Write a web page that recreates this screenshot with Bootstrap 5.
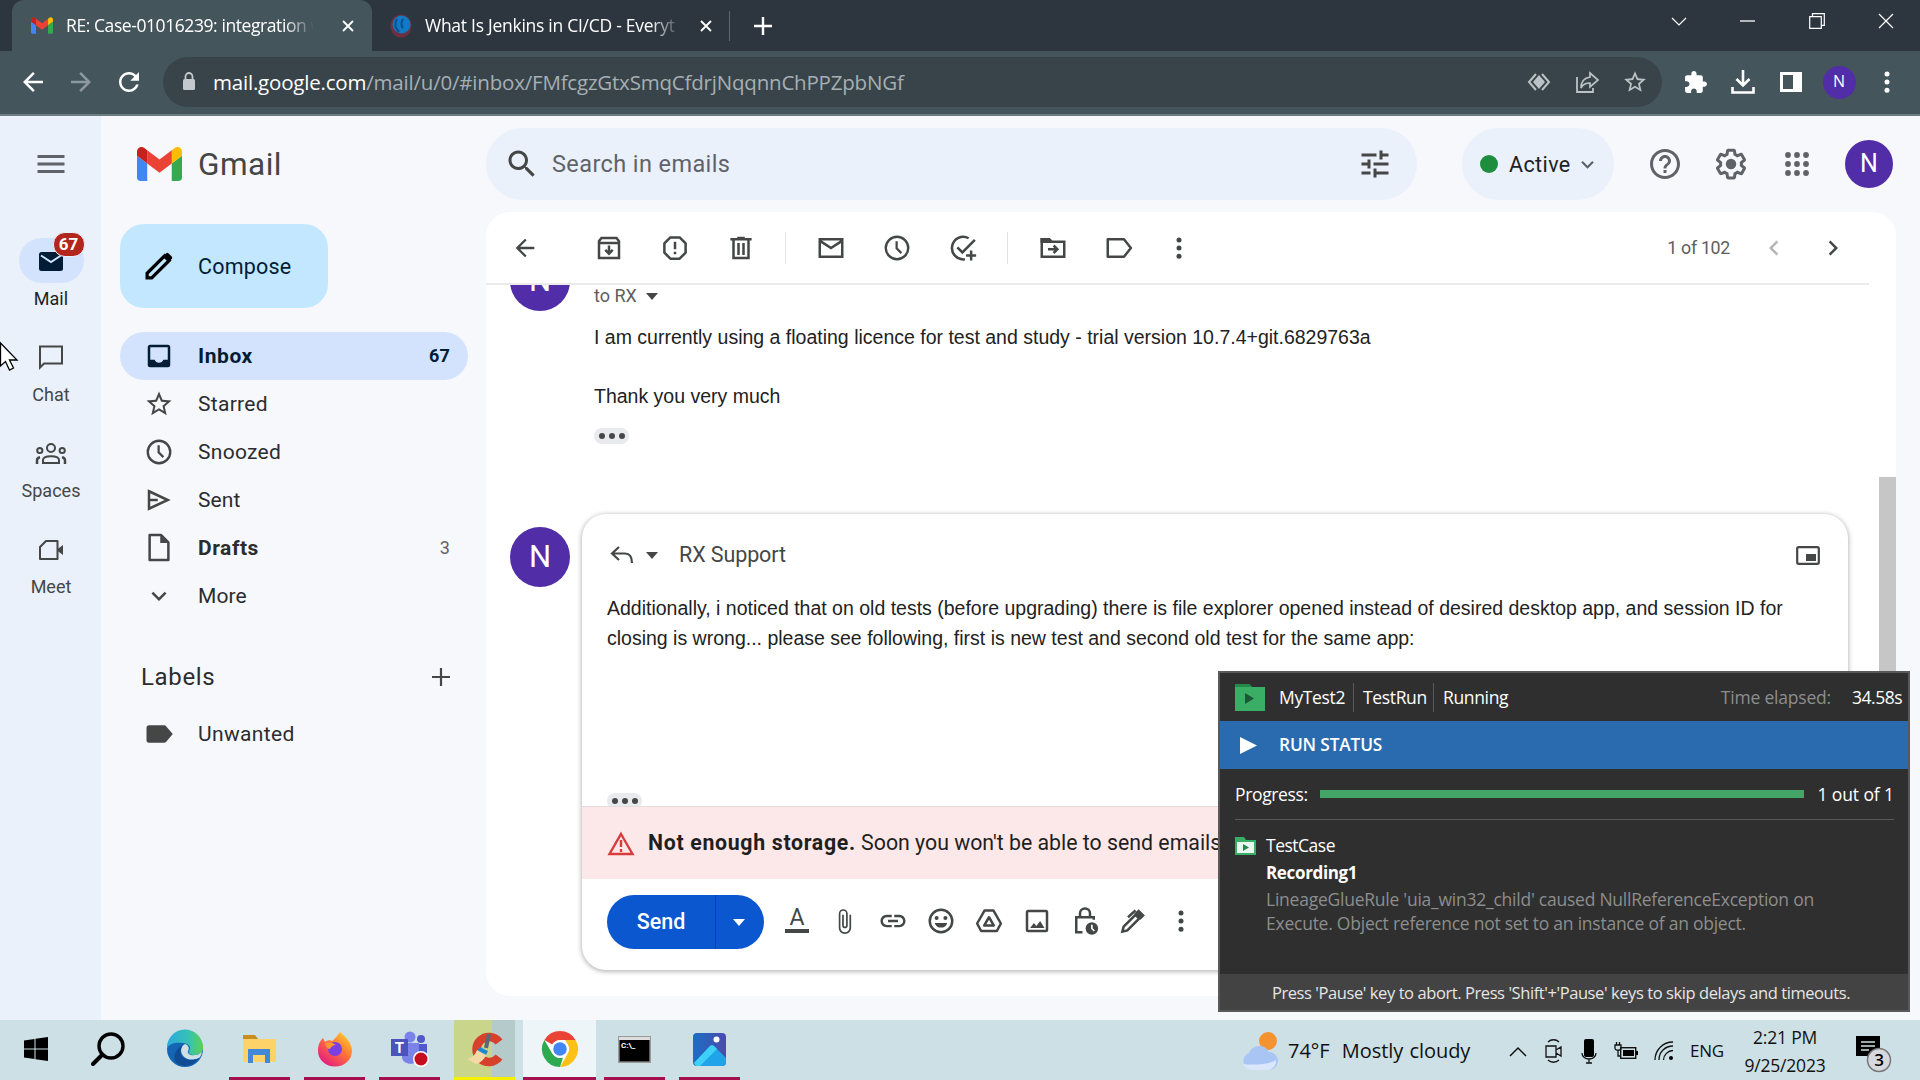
<!DOCTYPE html>
<html lang="en">
<head>
<meta charset="utf-8">
<title>Gmail</title>
<link href="https://cdn.jsdelivr.net/npm/bootstrap@5.3.0/dist/css/bootstrap.min.css" rel="stylesheet">
<style>
body{width:1920px;height:1080px;overflow:hidden;background:#f6f8fc;font-family:Roboto,"Noto Sans",sans-serif;color:#202124;line-height:1.2}
svg{display:block;flex:none;overflow:visible}
.i30{width:30px;height:30px;fill:currentColor}
.i36{width:36px;height:36px;fill:currentColor}
.ln{fill:none;stroke:currentColor;stroke-width:2}
.segoe{font-family:"Open Sans","Noto Sans",sans-serif}
.arial{font-family:"Liberation Sans",Arial,sans-serif}
/* browser chrome */
.tabstrip{height:51px;background:#2d363f;color:#fff;padding-left:12px}
.btab{height:51px;font-size:17.5px;letter-spacing:-.42px}
.btab-on{width:360px;background:#45555c;border-radius:12px 12px 0 0;padding-left:19px}
.btab-off{width:358px;padding-left:18px;border-right:1px solid #5d666e;height:30px}
.btitle{width:248px;overflow:hidden;white-space:nowrap;margin-left:13px;-webkit-mask-image:linear-gradient(90deg,#000 88%,transparent)}
.winbtns{width:276px}
.winbtns>div{width:69px;height:42px}
.bbar{height:65px;background:#45555c;color:#fff;border-bottom:2px solid #6c7d84;padding:6px 9px 7px 9px}
.cell48{width:48px}
.omni{width:1499px;height:50px;border-radius:25px;background:#38444a;margin-left:10px;padding:0 3px 0 14px;font-size:20.5px;color:#a6afb3}
.omni b{color:#fff;font-weight:400}
.av{border-radius:50%;background:#512da8;color:#fff}
/* app */
.app{height:904px}
.rail{width:101px;background:#eaf1fb;color:#444746;font-size:18px;padding-left:1px}
.railhead{height:96px}
.railitem{height:96px;padding-top:24px}
.railpill{width:65px;height:46px;border-radius:23px}
.railpill.on{background:#d3e3fd;color:#001d35}
.rbadge{left:34px;top:-6px;width:32px;height:25px;border-radius:12px;background:#b3261e;border:1px solid #eaf1fb;color:#fff;font-size:17px;font-weight:700}
.side{width:385px;color:#2b2c2f;font-size:21px}
.brand{height:96px;padding-left:36px;font-size:31.5px;color:#444746}
.compose{width:208px;height:84px;border-radius:24px;background:#c2e7ff;color:#001d35;margin:12px 0 24px 19px;padding-left:24px}
.srow{width:348px;height:48px;margin-left:19px;padding:0 18px 0 24px;border-radius:24px;letter-spacing:.12px}
.srow .i30,.compose .i30{color:#444746}
.srow.on{background:#d3e3fd;color:#001d35;font-weight:700}
.srow.on .i30{color:#001d35}
.stext{margin-left:24px;padding-top:1px}
.cnt{font-size:18px}
.topbar{height:96px}
.searchbox{width:931px;height:72px;border-radius:36px;background:#eaf1fb;color:#5f6368;font-size:23.5px;padding:0 24px 0 18px}
.activep{width:152px;height:72px;border-radius:36px;background:#eaf1fb;font-size:21.5px;margin-left:45px;padding-left:18px}
.dotg{width:18px;height:18px;border-radius:50%;background:#1e8e3e}
.cell66{width:66px}
.mailcard{width:1410px;height:784px;border-radius:24px;background:#fff;color:#444746;overflow:hidden}
.mtools{height:73px;width:1383px;border-bottom:2px solid #ebebeb}
.vr1{width:1px;height:32px;background:#e3e3e3}
.thread{height:711px;overflow:hidden}
.clipav{width:60px;height:60px;margin-top:-34px;font-size:31px}
.dots{width:35px;height:16px;border-radius:8px;background:#e8eaed}
.dots i{width:6px;height:6px;border-radius:50%;background:#444746}
.mtext{font-size:19.5px;line-height:30px;color:#222}
.reply{width:1266px;height:456px;border-radius:24px;background:#fff;box-shadow:0 1px 4px 1px rgba(60,64,67,.35);overflow:hidden}
.warn{height:73px;background:#fce8e8;font-size:21.3px;color:#1f1f1f;border-top:1px solid #e5dcdc;padding-left:25px}
.sendb{width:157px;height:54px;border-radius:27px;background:#0b57d0;color:#fff;font-size:21.5px;font-weight:500}
.sendb>span{width:109px;border-right:1px solid #08439f;height:54px}
.scroll-thumb{width:17px;height:600px;background:#c6c6c6;margin-top:192px}
/* runner window */
.runner{left:1218px;top:671px;width:692px;height:341px;background:#2f2f2f;border:2px solid #595959;color:#fff;font-size:17.5px;letter-spacing:-.35px}
.rhead{height:48px;padding:1px 6px 0 15px}
.rsep{width:1px;height:29px;background:#5a5a5a}
.rblue{height:48px;background:#2a6bb0;padding-left:20px;font-size:17.3px;font-weight:600;letter-spacing:-.15px}
.rprog{height:51px;margin:0 14px 0 15px;border-bottom:1px solid #5a5a5a}
.rprog .progress{width:485px;height:8px;border-radius:0;margin-left:12px;margin-right:13px}
.rprog .progress-bar{background:#43a667}
.rbody{padding:12px 15px 0;height:154px}
.gray{color:#8d8d8d}
.rfoot{height:36px;background:#434343;color:#e6e6e6;font-size:16.5px;letter-spacing:-.42px}
/* taskbar */
.taskbar{height:60px;background:#cde0e5;color:#111}
.tk{width:61px;height:60px;border-bottom:3px solid #a50f4f;margin-right:14px;padding-top:1px}
.tk.none{border-color:transparent}
.cursor{left:0;top:343px}
</style>
</head>
<body>
<svg width="0" height="0" class="position-absolute">
<symbol id="gm" viewBox="52 42 88 66"><path fill="#4285f4" d="M58 108h14V74L52 59v43c0 3.32 2.69 6 6 6"/><path fill="#34a853" d="M120 108h14c3.32 0 6-2.69 6-6V59l-20 15"/><path fill="#fbbc04" d="M120 48v26l20-15v-8c0-7.42-8.47-11.65-14.4-7.2"/><path fill="#ea4335" d="M72 74V48l24 18 24-18v26L96 92"/><path fill="#c5221f" d="M52 51v8l20 15V48l-5.6-4.2c-5.94-4.45-14.4-.22-14.4 7.2"/></symbol>
<symbol id="x" viewBox="0 0 12 12"><path d="M1 1l10 10M11 1L1 11" stroke="currentColor" stroke-width="1.8"/></symbol>
<symbol id="back" viewBox="0 0 24 24"><path d="M20 11H7.83l5.59-5.59L12 4l-8 8 8 8 1.41-1.41L7.83 13H20v-2z"/></symbol>
<symbol id="down" viewBox="0 0 24 24"><path d="M16.59 8.59L12 13.17 7.41 8.59 6 10l6 6 6-6z"/></symbol>
<symbol id="star" viewBox="0 0 24 24"><path d="M22 9.24l-7.19-.62L12 2 9.19 8.63 2 9.24l5.46 4.73L5.82 21 12 17.27 18.18 21l-1.63-7.03L22 9.24zM12 15.4l-3.76 2.27 1-4.28-3.32-2.88 4.38-.38L12 6.1l1.71 4.04 4.38.38-3.32 2.88 1 4.28L12 15.4z"/></symbol>
<symbol id="clock" viewBox="0 0 24 24"><circle cx="12" cy="12" r="9" fill="none" stroke="currentColor" stroke-width="1.9"/><path d="M11.7 6.5v5.8l3.8 3.8" fill="none" stroke="currentColor" stroke-width="1.8"/></symbol>
<symbol id="more" viewBox="0 0 24 24"><circle cx="12" cy="5.5" r="2"/><circle cx="12" cy="12" r="2"/><circle cx="12" cy="18.5" r="2"/></symbol>
<symbol id="tri" viewBox="0 0 12 7"><path d="M0 0h12L6 7z"/></symbol>
</svg>

<div class="tabstrip d-flex align-items-center segoe">
  <div class="btab btab-on d-flex align-items-center">
    <svg width="22" height="17"><use href="#gm"/></svg>
    <div class="btitle">RE: Case-01016239: integration w</div>
    <svg width="12" height="12" style="margin-left:28px"><use href="#x"/></svg>
  </div>
  <div class="btab btab-off d-flex align-items-center">
    <svg width="22" height="24" viewBox="0 0 22 24"><ellipse cx="11" cy="12" rx="10.5" ry="11.5" fill="#6d3040"/><circle cx="11.5" cy="10.500" r="9" fill="#1279c4"/><path d="M7 5c-3 5-2 9 2 13M13 5c-2 3-2 7 0 9" stroke="#0b4e90" stroke-width="2" fill="none"/></svg>
    <div class="btitle" style="letter-spacing:-.27px;width:256px">What Is Jenkins in CI/CD - Everyt</div>
    <svg width="12" height="12" style="margin-left:19px"><use href="#x"/></svg>
  </div>
  <svg width="18" height="18" viewBox="0 0 18 18" style="margin-left:24px"><path d="M9 0v18M0 9h18" stroke="#fff" stroke-width="2.4"/></svg>
  <div class="winbtns d-flex ms-auto align-self-start">
    <div class="d-flex align-items-center justify-content-center"><svg width="16" height="9" viewBox="0 0 16 9"><path class="ln" d="M1 1l7 7 7-7" style="stroke-width:1.2"/></svg></div>
    <div class="d-flex align-items-center justify-content-center"><svg width="15" height="2"><path d="M0 1h15" stroke="#fff" stroke-width="1.3"/></svg></div>
    <div class="d-flex align-items-center justify-content-center"><svg width="16" height="16" viewBox="0 0 16 16"><path d="M.7 3.7h11.6v11.6H.7zM3.5 3.500V.7h11.8v11.600h-2.800" class="ln" style="stroke-width:1.2"/></svg></div>
    <div class="d-flex align-items-center justify-content-center"><svg width="16" height="16" viewBox="0 0 16 16"><path class="ln" d="M1 1l14 14M15 1L1 15" style="stroke-width:1.2"/></svg></div>
  </div>
</div>

<div class="bbar d-flex align-items-center segoe">
  <div class="cell48 d-flex justify-content-center"><svg class="i30"><use href="#back"/></svg></div>
  <div class="cell48 d-flex justify-content-center" style="color:#8d999e"><svg class="i30" style="transform:scaleX(-1)"><use href="#back"/></svg></div>
  <div class="cell48 d-flex justify-content-center"><svg class="i30" viewBox="0 0 24 24"><path d="M17.650 6.350C16.200 4.900 14.210 4 12 4c-4.420 0-7.990 3.580-7.990 8s3.570 8 7.990 8c3.730 0 6.840-2.550 7.730-6h-2.080c-.82 2.330-3.040 4-5.650 4-3.310 0-6-2.690-6-6s2.690-6 6-6c1.660 0 3.140.69 4.220 1.780L13 11h7V4l-2.350 2.350z"/></svg></div>
  <div class="omni d-flex align-items-center">
    <svg width="24" height="20" viewBox="0 0 24 20"><rect x="6" y="7" width="12" height="11" rx="1.500" fill="#c3c9cc"/><path d="M8.500 7V4.500a3.500 3.500 0 0 1 7 0V7" fill="none" stroke="#c3c9cc" stroke-width="1.800"/></svg>
    <div class="text-nowrap" style="margin-left:12px;letter-spacing:-.2px"><b>mail.google.com</b>/mail/u/0/#inbox/FMfcgzGtxSmqCfdrjNqqnnChPPZpbNGf</div>
    <div class="d-flex ms-auto align-items-center" style="color:#bcc3c6">
      <div class="cell48 d-flex justify-content-center"><svg width="22" height="18" viewBox="0 0 22 18"><path d="M8 1L1 9l7 8M14 1l7 8-7 8" class="ln"/><path d="M11 2l6 7-6 7-6-7z" fill="currentColor"/></svg></div>
      <div class="cell48 d-flex justify-content-center"><svg width="23" height="22" viewBox="0 0 23 22"><path d="M1 6v15h16v-4" class="ln" style="stroke-width:1.800"/><path d="M14 2l8 7-8 7v-4c-4 0-7 1-9 5 0-6 3-10 9-11z" class="ln" style="stroke-width:1.700"/></svg></div>
      <div class="cell48 d-flex justify-content-center"><svg width="26" height="26" fill="currentColor"><use href="#star"/></svg></div>
    </div>
  </div>
  <div class="d-flex align-items-center" style="margin-left:9px">
    <div class="cell48 d-flex justify-content-center"><svg width="25" height="25" viewBox="0 0 24 24" fill="#fff"><path d="M20.500 11H19V7c0-1.100-.9-2-2-2h-4V3.500C13 2.120 11.880 1 10.500 1S8 2.120 8 3.500V5H4c-1.100 0-1.990.9-1.990 2v3.800H3.500c1.490 0 2.700 1.210 2.700 2.700s-1.210 2.700-2.700 2.700H2V20c0 1.100.9 2 2 2h3.800v-1.500c0-1.490 1.210-2.700 2.700-2.700 1.490 0 2.700 1.210 2.700 2.700V22H17c1.100 0 2-.9 2-2v-4h1.500c1.380 0 2.500-1.120 2.500-2.500S21.880 11 20.500 11z"/></svg></div>
    <div class="cell48 d-flex justify-content-center"><svg width="24" height="24" viewBox="0 0 24 24"><path d="M12 0v15M5.500 9l6.500 6.500L18.500 9M1.500 17v5.500h21V17" class="ln" style="stroke-width:2.600"/></svg></div>
    <div class="cell48 d-flex justify-content-center"><svg width="22" height="20" viewBox="0 0 22 20"><path fill="#fff" fill-rule="evenodd" d="M0 0h22v20H0zM3 3v14h10V3z"/></svg></div>
    <div class="cell48 d-flex justify-content-center"><div class="av d-flex align-items-center justify-content-center" style="width:33px;height:33px;font-size:16px">N</div></div>
    <div class="cell48 d-flex justify-content-center"><svg class="i30"><use href="#more"/></svg></div>
  </div>
</div>

<div class="app d-flex">
  <nav class="rail d-flex flex-column">
    <div class="railhead d-flex align-items-center justify-content-center"><svg class="i36" style="color:#5f6368" viewBox="0 0 24 24"><path d="M3 18h18v-2H3v2zm0-5h18v-2H3v2zm0-7v2h18V6H3z"/></svg></div>
    <div class="railitem d-flex flex-column align-items-center" style="color:#1f1f1f;margin-top:2px">
      <div class="railpill on position-relative d-flex align-items-center justify-content-center"><svg width="24" height="19" viewBox="0 0 24 19" style="margin-top:2px"><rect width="24" height="19" rx="2.500" fill="#001d35"/><path d="M2 3.500l10 6.500 10-6.500" stroke="#d3e3fd" stroke-width="2" fill="none"/></svg>
        <div class="rbadge position-absolute d-flex align-items-center justify-content-center">67</div></div>
      <div style="margin-top:5px">Mail</div>
    </div>
    <div class="railitem d-flex flex-column align-items-center">
      <div class="railpill d-flex align-items-center justify-content-center"><svg width="24" height="24" viewBox="0 0 24 24"><path class="ln" d="M1 22.500V1.500h22v17H5z"/></svg></div>
      <div style="margin-top:5px">Chat</div>
    </div>
    <div class="railitem d-flex flex-column align-items-center">
      <div class="railpill d-flex align-items-center justify-content-center"><svg width="30" height="21" viewBox="0 0 30 21" style="margin-top:2px"><g class="ln"><circle cx="15" cy="5" r="4"/><circle cx="3.800" cy="7.500" r="2.600"/><circle cx="26.200" cy="7.500" r="2.600"/><path d="M7 20v-3c0-5 16-5 16 0v3z"/><path d="M1 21v-3.500c0-2 1-3 3-3.300M29 21v-3.500c0-2-1-3-3-3.300" style="stroke-width:2.500"/></g></svg></div>
      <div style="margin-top:5px">Spaces</div>
    </div>
    <div class="railitem d-flex flex-column align-items-center">
      <div class="railpill d-flex align-items-center justify-content-center"><svg width="24" height="20" viewBox="0 0 24 20" style="margin-top:2px"><path class="ln" d="M7 1h11.500v18H1V7z" stroke-linejoin="round"/><path d="M18 9.500L24 5v10l-6-4.500z" fill="currentColor"/></svg></div>
      <div style="margin-top:5px">Meet</div>
    </div>
  </nav>

  <aside class="side">
    <div class="brand d-flex align-items-center"><svg width="45" height="34"><use href="#gm"/></svg><span style="margin-left:16px;letter-spacing:.5px;padding-top:2px">Gmail</span></div>
    <div class="compose d-flex align-items-center"><svg class="i30" viewBox="0 0 24 24"><path fill="none" stroke="#000" stroke-width="2.600" d="M2.500 21.500v-3.700L16.500 3.800l3.700 3.700L6.200 21.500z"/><path fill="#000" d="M15 4.500l2.600-2.600c.6-.6 1.500-.6 2.100 0l2.400 2.400c.6.600.6 1.500 0 2.100L19.500 9z"/></svg><span class="stext" style="letter-spacing:.2px;font-size:21.500px">Compose</span></div>
    <div class="srow on d-flex align-items-center"><svg class="i30" viewBox="0 0 24 24"><path fill-rule="evenodd" d="M5 3h14a2 2 0 0 1 2 2v14a2 2 0 0 1-2 2H5a2 2 0 0 1-2-2V5a2 2 0 0 1 2-2zm0 2v10h3.500a3.800 3.800 0 0 0 7 0H19V5z"/></svg><span class="stext" style="letter-spacing:.55px">Inbox</span><span class="cnt ms-auto">67</span></div>
    <div class="srow d-flex align-items-center"><svg class="i30"><use href="#star"/></svg><span class="stext" style="letter-spacing:.3px">Starred</span></div>
    <div class="srow d-flex align-items-center"><svg class="i30"><use href="#clock"/></svg><span class="stext" style="letter-spacing:.3px">Snoozed</span></div>
    <div class="srow d-flex align-items-center"><svg class="i30" viewBox="0 0 24 24"><path class="ln" d="M4 5l15 7-15 7zM4 12h7"/></svg><span class="stext">Sent</span></div>
    <div class="srow d-flex align-items-center"><svg class="i30" viewBox="0 0 24 24"><path class="ln" d="M4.500 1.500h9l6 6v14h-15z" stroke-linejoin="round"/><path d="M13 2v6h6z"/></svg><span class="stext fw-bold" style="letter-spacing:.55px">Drafts</span><span class="cnt ms-auto" style="color:#5f6368">3</span></div>
    <div class="srow d-flex align-items-center"><svg class="i30"><use href="#down"/></svg><span class="stext">More</span></div>
    <div class="d-flex align-items-center" style="height:48px;margin:33px 0 9px 40px;width:309px;font-size:24px;letter-spacing:.65px"><span>Labels</span><svg width="18" height="18" viewBox="0 0 18 18" class="ms-auto"><path d="M9 0v18M0 9h18" stroke="#444746" stroke-width="2.200"/></svg></div>
    <div class="srow d-flex align-items-center"><svg class="i30" viewBox="0 0 24 24"><path d="M4 5h12c.8 0 1.400.3 1.800.9L23 12l-5.200 6.100c-.4.600-1 .9-1.800.9H4a2 2 0 0 1-2-2V7c0-1.100.9-2 2-2z"/></svg><span class="stext" style="letter-spacing:.35px">Unwanted</span></div>
  </aside>

  <main>
    <div class="topbar d-flex align-items-center">
      <div class="searchbox d-flex align-items-center"><svg class="i36" style="color:#444746" viewBox="0 0 24 24"><path d="M15.500 14h-.79l-.28-.27C15.410 12.590 16 11.110 16 9.500 16 5.910 13.090 3 9.500 3S3 5.910 3 9.500 5.910 16 9.500 16c1.610 0 3.090-.59 4.230-1.570l.27.28v.79l5 4.990L20.490 19l-4.990-5zm-6 0C7.010 14 5 11.990 5 9.500S7.010 5 9.500 5 14 7.010 14 9.500 11.990 14 9.500 14z"/></svg><span style="margin-left:12px;letter-spacing:.4px">Search in emails</span>
      <svg class="i36 ms-auto" style="color:#444746" viewBox="0 0 24 24"><path d="M3 17v2h6v-2H3zM3 5v2h10V5H3zm10 16v-2h8v-2h-8v-2h-2v6h2zM7 9v2H3v2h4v2h2V9H7zm14 4v-2H11v2h10zm-6-4h2V7h4V5h-4V3h-2v6z"/></svg></div>
      <div class="activep d-flex align-items-center"><span class="dotg"></span><span style="margin-left:11px;padding-top:2px;letter-spacing:.4px">Active</span><svg width="25" height="25" style="margin-left:4px" fill="#5f6368"><use href="#down"/></svg></div>
      <div class="d-flex align-items-center" style="margin-left:18px;color:#5f6368">
        <div class="cell66 d-flex justify-content-center"><svg class="i36" viewBox="0 0 24 24"><path d="M11 18h2v-2h-2v2zm1-16C6.480 2 2 6.480 2 12s4.480 10 10 10 10-4.480 10-10S17.520 2 12 2zm0 18c-4.410 0-8-3.590-8-8s3.590-8 8-8 8 3.590 8 8-3.590 8-8 8zm0-14c-2.210 0-4 1.790-4 4h2c0-1.100.9-2 2-2s2 .9 2 2c0 2-3 1.750-3 5h2c0-2.250 3-2.500 3-5 0-2.210-1.790-4-4-4z"/></svg></div>
        <div class="cell66 d-flex justify-content-center"><svg class="i36" viewBox="0 0 24 24"><path d="M13.850 22.250h-3.700c-.74 0-1.360-.54-1.450-1.270l-.27-1.890c-.27-.14-.53-.29-.79-.46l-1.800.72c-.7.260-1.470-.03-1.810-.65L2.200 15.530c-.35-.66-.2-1.440.36-1.880l1.530-1.190c-.01-.15-.02-.3-.02-.46 0-.15.01-.31.02-.46l-1.520-1.190c-.59-.45-.74-1.260-.37-1.880l1.850-3.190c.34-.62 1.110-.9 1.790-.63l1.810.73c.26-.17.52-.32.78-.46l.27-1.910c.09-.7.71-1.250 1.440-1.250h3.700c.74 0 1.360.54 1.450 1.270l.27 1.890c.27.140.53.290.79.460l1.800-.72c.71-.26 1.480.03 1.820.65l1.840 3.180c.36.660.2 1.440-.36 1.880l-1.520 1.190c.01.150.02.300.02.460s-.01.310-.02.460l1.520 1.190c.56.450.72 1.230.37 1.860l-1.860 3.220c-.34.620-1.110.9-1.800.63l-1.800-.72c-.26.170-.52.320-.78.460l-.27 1.910c-.1.680-.72 1.220-1.460 1.220zm-3.230-2h2.760l.37-2.550.53-.22c.44-.18.88-.44 1.340-.78l.45-.34 2.380.96 1.380-2.400-2.030-1.580.07-.56c.03-.26.06-.51.06-.78s-.03-.53-.06-.78l-.07-.56 2.030-1.580-1.390-2.400-2.390.96-.45-.35c-.42-.32-.87-.58-1.330-.77l-.52-.22-.37-2.550h-2.760l-.37 2.550-.53.210c-.44.190-.88.440-1.340.79l-.45.330-2.380-.95-1.390 2.390 2.030 1.580-.07.560a7 7 0 0 0-.06.790c0 .26.020.53.060.78l.07.560-2.030 1.580 1.380 2.400 2.390-.96.45.350c.43.330.86.580 1.330.77l.53.220.38 2.550z"/><circle cx="12" cy="12" r="3.500"/></svg></div>
        <div class="cell66 d-flex justify-content-center"><svg width="24" height="24" viewBox="0 0 24 24" fill="currentColor"><g id="d3"><circle cx="3" cy="3" r="2.900"/><circle cx="12" cy="3" r="2.900"/><circle cx="21" cy="3" r="2.900"/></g><use href="#d3" y="9"/><use href="#d3" y="18"/></svg></div>
        <div class="av d-flex align-items-center justify-content-center" style="width:48px;height:48px;font-size:25px;margin-left:15px">N</div>
      </div>
    </div>

    <div class="mailcard">
      <div class="mtools d-flex align-items-center">
        <svg class="i30" style="margin-left:25px;width:28px"><use href="#back"/></svg>
        <div class="d-flex justify-content-center cell66" style="margin-left:37px"><svg class="i30" viewBox="0 0 24 24"><path class="ln" d="M4 6.500L6 4h12l2 2.500V20H4zM4 8h16M12 10v6M9 13.500l3 3 3-3"/></svg></div>
        <div class="d-flex justify-content-center cell66"><svg class="i30" viewBox="0 0 24 24"><path class="ln" d="M8.300 3.500h7.400l4.800 4.800v7.400l-4.800 4.800H8.300l-4.800-4.800V8.300z" stroke-linejoin="round"/><path d="M11 7h2v6h-2zM11 15h2v2h-2z"/></svg></div>
        <div class="d-flex justify-content-center cell66"><svg class="i30" viewBox="0 0 24 24"><path class="ln" d="M3.500 5h17M9 4h6M6 5v15h12V5M10 8v9.500M14 8v9.500"/></svg></div>
        <div class="vr1" style="margin-left:11px"></div>
        <div class="d-flex justify-content-center cell66" style="margin-left:12px"><svg class="i30" viewBox="0 0 24 24"><path class="ln" d="M3 5h18v14H3zM3.500 6.500L12 12l8.500-5.500"/></svg></div>
        <div class="d-flex justify-content-center cell66"><svg class="i30"><use href="#clock"/></svg></div>
        <div class="d-flex justify-content-center cell66"><svg class="i30" viewBox="0 0 24 24"><path class="ln" d="M16.500 4.200A9 9 0 1 0 13.500 21M7.500 11.500l4 4L21.500 5.500M18.500 14v8M14.500 18h8"/></svg></div>
        <div class="vr1" style="margin-left:11px"></div>
        <div class="d-flex justify-content-center cell66" style="margin-left:12px"><svg class="i30" viewBox="0 0 24 24"><path class="ln" d="M3 5h6l2 2h10v12H3zM8 13h7M12.500 10l3 3-3 3"/><path d="M2 4h7l2 3v1H2z"/></svg></div>
        <div class="d-flex justify-content-center cell66"><svg class="i30" viewBox="0 0 24 24"><path class="ln" d="M3 5h13l5.500 7-5.500 7H3z" stroke-linejoin="round"/></svg></div>
        <div class="d-flex justify-content-center" style="width:54px"><svg class="i30"><use href="#more"/></svg></div>
        <div class="ms-auto text-nowrap" style="color:#5e5e5e;font-size:17.800px;letter-spacing:-.3px">1 of 102</div>
        <svg class="i30" style="transform:rotate(90deg);color:#b5b5b5;margin-left:29px"><use href="#down"/></svg>
        <svg class="i30" style="transform:rotate(-90deg);margin:0 21px 0 29px"><use href="#down"/></svg>
      </div>
      <div class="thread d-flex">
        <div style="width:96px;padding-left:24px">
          <div class="av clipav d-flex align-items-center justify-content-center">N</div>
          <div class="av d-flex align-items-center justify-content-center" style="width:60px;height:60px;font-size:31px;margin-top:216px">N</div>
        </div>
        <div style="width:1266px">
          <div style="padding-left:12px;height:229px">
            <div class="d-flex align-items-center" style="height:22px;font-size:18px;color:#5e5e5e">to RX<svg width="12" height="7" style="margin-left:9px" fill="#444746"><use href="#tri"/></svg></div>
            <div class="mtext arial text-nowrap" style="margin-top:15px">I am currently using a floating licence for test and study - trial version 10.7.4+git.6829763a</div>
            <div class="mtext arial" style="margin-top:29px">Thank you very much</div>
            <div class="dots d-flex align-items-center justify-content-center gap-1" style="margin-top:17px"><i></i><i></i><i></i></div>
          </div>
          <div class="reply d-flex flex-column">
            <div class="d-flex align-items-center" style="padding:0 28px 0 28px;height:82px;font-size:21.500px">
              <svg width="24" height="18" viewBox="0 0 24 18"><path class="ln" d="M9 1L2 7.500 9 14M2 7.500h13c4 0 7 3 7 9.500" style="stroke-width:2.200"/></svg>
              <svg width="12" height="7" style="margin-left:12px" fill="#444746"><use href="#tri"/></svg>
              <span style="margin-left:21px;letter-spacing:-.1px">RX Support</span>
              <svg class="ms-auto" width="24" height="19" viewBox="0 0 24 19"><rect x="1.200" y="1.200" width="21.600" height="16.600" rx="1.500" class="ln" style="stroke-width:2.200"/><path d="M10 8h10v7H10z" fill="currentColor"/></svg>
            </div>
            <div class="mtext arial text-nowrap" style="padding-left:25px;margin-top:-3px;height:200px">Additionally, i noticed that on old tests (before upgrading) there is file explorer opened instead of desired desktop app, and session ID for<br>closing is wrong... please see following, first is new test and second old test for the same app:</div>
            <div style="height:13px;overflow:hidden;padding-left:25px"><div class="dots d-flex align-items-center justify-content-center gap-1"><i></i><i></i><i></i></div></div>
            <div class="warn d-flex align-items-center text-nowrap"><svg width="28" height="25" viewBox="0 0 28 25"><path d="M14 3l11.500 20h-23z" fill="none" stroke="#d93c3c" stroke-width="2.400"/><path d="M14 9v7M14 18v3" stroke="#d93c3c" stroke-width="2.400"/></svg><span style="margin-left:13px"><b style="letter-spacing:.68px">Not enough storage.</b> Soon you won't be able to send emails.</span></div>
            <div class="d-flex align-items-center" style="padding:16px 0 0 25px">
              <div class="sendb d-flex align-items-center"><span class="d-flex align-items-center justify-content-center">Send</span><svg width="12" height="7" fill="#fff" style="margin-left:17px"><use href="#tri"/></svg></div>
              <div class="d-flex align-items-center" style="margin-left:9px;padding-bottom:2px">
                <div class="cell48 d-flex justify-content-center"><svg width="24" height="26" viewBox="0 0 24 26"><text x="12" y="17" text-anchor="middle" font-size="23" fill="#444746">A</text><path d="M0 21h24v4H0z" fill="#444746"/></svg></div>
                <div class="cell48 d-flex justify-content-center"><svg width="27" height="27" fill="currentColor" viewBox="1 0 24 24"><path d="M16.500 6v11.500c0 2.210-1.790 4-4 4s-4-1.790-4-4V5a2.500 2.500 0 0 1 5 0v10.500c0 .55-.45 1-1 1s-1-.45-1-1V6H10v9.500a2.500 2.500 0 0 0 5 0V5c0-2.210-1.790-4-4-4S7 2.790 7 5v12.500c0 3.040 2.460 5.500 5.500 5.500s5.500-2.460 5.500-5.500V6h-1.500z"/></svg></div>
                <div class="cell48 d-flex justify-content-center"><svg class="i30" viewBox="0 0 24 24"><path d="M3.900 12c0-1.710 1.390-3.100 3.100-3.100h4V7H7c-2.760 0-5 2.240-5 5s2.240 5 5 5h4v-1.900H7c-1.710 0-3.100-1.390-3.100-3.100zM8 13h8v-2H8v2zm9-6h-4v1.900h4c1.710 0 3.100 1.390 3.100 3.100s-1.390 3.100-3.100 3.100h-4V17h4c2.760 0 5-2.240 5-5s-2.240-5-5-5z"/></svg></div>
                <div class="cell48 d-flex justify-content-center"><svg class="i30" viewBox="0 0 24 24"><circle cx="12" cy="12" r="9" class="ln"/><circle cx="8.500" cy="9.500" r="1.600"/><circle cx="15.500" cy="9.500" r="1.600"/><path d="M7 13.500h10c-1 5-9 5-10 0z"/></svg></div>
                <div class="cell48 d-flex justify-content-center"><svg class="i30" viewBox="0 0 24 24"><path class="ln" d="M8.500 3.500h7L21.500 14l-3.200 6H5.700l-3.200-6zM12 9l3.800 6.500H8.200z" stroke-linejoin="round"/></svg></div>
                <div class="cell48 d-flex justify-content-center"><svg class="i30" viewBox="0 0 24 24"><rect x="4" y="4" width="16" height="16" rx="1" class="ln"/><path d="M6.500 17.500l3-4 2 2.500 3-4 3.500 5.500z"/></svg></div>
                <div class="cell48 d-flex justify-content-center"><svg class="i30" viewBox="0 0 24 24"><path class="ln" d="M10 21H5V9h14v2M8 9V6a4 4 0 0 1 8 0v3"/><circle cx="17.500" cy="18" r="5"/><path d="M17.500 15v3l2 2" stroke="#fff" stroke-width="1.300" fill="none"/></svg></div>
                <div class="cell48 d-flex justify-content-center"><svg class="i30" viewBox="0 0 24 24"><path class="ln" d="M3.500 20.500l1-4L14 7l3 3-9.500 9.500zM8 9l6-5.500"/><path d="M13 6l3.500-3.500 5 5L18 11z"/></svg></div>
                <div class="cell48 d-flex justify-content-center"><svg class="i30"><use href="#more"/></svg></div>
              </div>
            </div>
          </div>
        </div>
        <div class="scroll-thumb" style="margin-left:31px"></div>
      </div>
    </div>
  </main>
</div>

<footer class="taskbar d-flex">
  <div class="tk none d-flex align-items-center justify-content-center" style="margin-left:5px;margin-right:11px"><svg width="24" height="24" viewBox="0 0 24 24"><path d="M0 3.500l10.500-1.500v9.500H0zM11.500 1.800L24 0v11.500H11.500zM0 12.500h10.500V22L0 20.500zM11.500 12.500H24V24l-12.500-1.800z"/></svg></div>
  <div class="tk none d-flex align-items-center justify-content-center" style="margin-right:16px"><svg width="34" height="34" viewBox="0 0 34 34"><circle cx="20" cy="14" r="12" fill="none" stroke="#000" stroke-width="3.400"/><path d="M11.500 22.500L2 32" stroke="#000" stroke-width="4" stroke-linecap="round"/></svg></div>
  <div class="tk none d-flex align-items-center justify-content-center"><svg width="36" height="36" viewBox="0 0 36 36"><defs><linearGradient id="e1" x1="0" x2="1"><stop offset="0" stop-color="#2aa9df"/><stop offset=".6" stop-color="#35c2b4"/><stop offset="1" stop-color="#5bd34f"/></linearGradient></defs><circle cx="18" cy="18" r="18" fill="#1565b5"/><path d="M0 17A18 18 0 0 1 36 16c0 6-4 8-9 8-4 0-6-2-5-4 3-4-1-8-6-8C8 11 2 13 0 17z" fill="url(#e1)"/><path d="M14 19c0-3 2-5 4-6 3 1 5 4 3 7-1 3 3 5 7 4 4 0 5-2 7-3-1 4-2 5-3 6-9 4-18 0-18-8z" fill="#cde0e5"/><path d="M14 19c-2 8 7 13 18 8-7 10-20 10-24 3-2-6 1-12 8-16-1 1-2 3-2 5z" fill="#104c94"/></svg></div>
  <div class="tk d-flex align-items-center justify-content-center"><svg width="33" height="28" viewBox="0 0 33 28"><path d="M0 0h12l3 4H0z" fill="#c88d1c"/><path d="M0 4h33v23H0z" fill="#fdd268"/><path d="M5 28V14h22v14h-5v-8H10v8z" fill="#4288d8"/></svg></div>
  <div class="tk d-flex align-items-center justify-content-center"><svg width="34" height="34" viewBox="0 0 34 34"><defs><linearGradient id="ff" x1="1" y1="0" x2=".2" y2="1"><stop offset="0" stop-color="#ffe226"/><stop offset=".5" stop-color="#ff7139"/><stop offset="1" stop-color="#e31587"/></linearGradient></defs><path d="M22 0c3 3 6 5 8 8 3 4 4 8 4 11a17 15.500 0 0 1-34 0c0-5 1-9 5-13l2 4c3-2 5-2 7-1 3-2 5-5 8-9z" fill="url(#ff)"/><circle cx="17" cy="17" r="7" fill="#7a3fe0"/><path d="M7 12c3-3 7-2 11 1-3 0-5 2-6 4-2 0-4-2-5-5z" fill="#ff9533"/></svg></div>
  <div class="tk d-flex align-items-center justify-content-center"><svg width="38" height="36" viewBox="0 0 38 36"><circle cx="19" cy="6" r="5.500" fill="#7b83eb"/><circle cx="30" cy="8" r="4" fill="#5059c9"/><path d="M24 13h12v12c0 6-12 6-12 0z" fill="#5059c9"/><path d="M11 12h17v14c0 9-17 9-17 0z" fill="#7b83eb"/><rect y="8" width="17" height="17" fill="#4b53bc"/><text x="8.500" y="22" text-anchor="middle" font-size="15" font-weight="700" fill="#fff">T</text><circle cx="30" cy="28" r="8" fill="#fff"/><circle cx="30" cy="28" r="6.500" fill="#c50f1f"/></svg></div>
  <div class="tk d-flex align-items-center justify-content-center" style="background:linear-gradient(90deg,#c8d58a 62%,#b5cacb 62%);border-color:#f4f000;margin-right:8px"><svg width="36" height="34" viewBox="0 0 36 34"><path d="M32 10A12.500 12.500 0 1 0 32 25" fill="none" stroke="#d7402b" stroke-width="8.500"/><path d="M22 2l-3 14" stroke="#58697a" stroke-width="4"/><path d="M13 15l8 4-2 4-9-4z" fill="#1e88d2"/><path d="M10 18l9 5c-2 5-6 8-10 9l-9-5c5-1 8-4 10-9z" fill="#f2d9a6"/></svg></div>
  <div class="tk d-flex align-items-center justify-content-center" style="width:73px;background:#eef5f9;margin-right:8px"><svg width="36" height="36" viewBox="0 0 48 48"><circle cx="24" cy="24" r="24" fill="#fff"/><path d="M24 0a24 24 0 0 1 20.800 12H24a12 12 0 0 0-10.400 6L3.200 12A24 24 0 0 1 24 0z" fill="#ea4335"/><path d="M44.800 12A24 24 0 0 1 24 48l10.400-18A12 12 0 0 0 34.400 18L31 12z" fill="#fbc116"/><path d="M3.200 12l10.400 18A12 12 0 0 0 28 35.300L24 48A24 24 0 0 1 3.200 12z" fill="#2da94f"/><circle cx="24" cy="24" r="11.500" fill="#fff"/><circle cx="24" cy="24" r="9" fill="#4285f4"/></svg></div>
  <div class="tk d-flex align-items-center justify-content-center"><svg width="33" height="27" viewBox="0 0 33 27"><rect x=".8" y=".8" width="31.400" height="25.400" fill="#000" stroke="#9a9a9a" stroke-width="1.600"/><path d="M1 1h31v3H1z" fill="#ddd"/><text x="3" y="12" font-size="8" fill="#fff" font-weight="700">C:\_</text></svg></div>
  <div class="tk d-flex align-items-center justify-content-center"><svg width="33" height="33" viewBox="0 0 33 33"><defs><linearGradient id="ph" x1="0" x2="1"><stop offset="0" stop-color="#1b6ec6"/><stop offset="1" stop-color="#4b4bab"/></linearGradient></defs><rect width="33" height="33" rx="4" fill="url(#ph)"/><path d="M1 30L17 13c1-1 3-1 4 0l12 12v4a4 4 0 0 1-4 4H4c-1 0-2-1-3-3z" fill="#1fa4ea"/><path d="M1 30L17 13c1-1 3-1 4 0l3 3L7 33H4c-1 0-2-1-3-3z" fill="#3fd0f7"/><circle cx="23.500" cy="6.500" r="3" fill="#fff"/></svg></div>
  <div class="ms-auto d-flex align-items-center segoe" style="width:679px;font-size:20px;padding-top:2px">
    <svg width="38" height="40" viewBox="0 0 38 40"><circle cx="27" cy="10" r="9" fill="#f59331"/><path d="M9 39a9 9 0 0 1-1-17 11 11 0 0 1 20-1 9 9 0 0 1 0 18z" fill="#a9c5f3"/><path d="M9 39a9 9 0 0 1-7-6c8 1 26 1 33-4a9 9 0 0 1-7 10z" fill="#d9e6fb"/></svg>
    <span class="text-nowrap" style="margin-left:9px;width:185px;letter-spacing:-.05px;word-spacing:1px">74°F&nbsp; Mostly cloudy</span>
    <svg width="18" height="11" viewBox="0 0 18 11" style="margin-left:36px"><path class="ln" d="M1 10l8-8 8 8" style="stroke-width:1.500"/></svg>
    <svg width="18" height="24" viewBox="0 0 18 24" style="margin-left:18px"><path class="ln" style="stroke-width:1.300" d="M1 7h10v11H1zM11 11l5-3v9l-5-3M3 3c3-3 8-3 11 0M3 21c3 3 8 3 11 0"/></svg>
    <svg width="16" height="25" viewBox="0 0 16 25" style="margin-left:18px"><rect x="3" width="10" height="18" rx="2"/><path class="ln" style="stroke-width:1.300" d="M1 14c0 8 14 8 14 0M8 20v4M5 24h6"/></svg>
    <svg width="24" height="18" viewBox="0 0 24 18" style="margin-left:17px"><rect x="6.700" y="5.700" width="15" height="10.600" class="ln" style="stroke-width:1.400"/><rect x="9" y="8" width="11" height="6"/><path d="M22 9h2v4h-2z"/><path class="ln" style="stroke-width:1.300" d="M1 3h6v3c0 3-6 3-6 0zM2.500 0v3M5.500 0v3M4 8v6h3"/></svg>
    <svg width="20" height="20" viewBox="0 0 20 20" style="margin-left:16px"><g class="ln" style="stroke-width:1.300"><path d="M1 19C1 9 9 1 19 1M5 19C5 11 11 5 19 5M9.500 19c0-5 4.500-9.500 9.500-9.500"/></g><circle cx="17" cy="17" r="2"/></svg>
    <span style="margin-left:16px;font-size:17px;letter-spacing:-.3px;width:35px">ENG</span>
    <div class="text-center text-nowrap" style="margin-left:10px;width:100px;font-size:17.500px;line-height:28px;letter-spacing:-.2px">2:21 PM<br>9/25/2023</div>
    <svg width="38" height="40" viewBox="0 0 38 40" style="margin-left:21px;margin-top:2px"><path d="M0 4h24v20h-7v6l-6-6H0z"/><path d="M5 10h14M5 14h14M5 18h8" stroke="#cde0e5" stroke-width="1.500"/><circle cx="23" cy="28" r="11.500" fill="#d5d9dd" stroke="#777" stroke-width="1.500"/><text x="23" y="34" text-anchor="middle" font-size="17" font-weight="600">3</text></svg>
  </div>
</footer>

<section class="runner position-absolute segoe">
  <div class="rhead d-flex align-items-center">
    <svg width="30" height="27" viewBox="0 0 30 27"><path d="M0 0h14l3 3h13v24H0z" fill="#3bae66"/><path d="M0 0h14l3 3H0z" fill="#248a4c"/><path d="M10 9l9 5.500-9 5.500z" fill="#1d5634"/></svg>
    <span style="margin-left:14px;width:74px">MyTest2</span><span class="rsep"></span><span style="margin-left:9px;width:70px">TestRun</span><span class="rsep"></span><span style="margin-left:9px">Running</span>
    <span class="gray ms-auto" style="letter-spacing:-.2px">Time elapsed:</span><span style="margin-left:21px;letter-spacing:-.5px">34.58s</span>
  </div>
  <div class="rblue d-flex align-items-center"><svg width="17" height="17" viewBox="0 0 17 17"><path d="M0 0l17 8.500L0 17z" fill="#fff"/></svg><span style="margin-left:22px">RUN STATUS</span></div>
  <div class="rprog d-flex align-items-center text-nowrap"><span>Progress:</span><div class="progress"><div class="progress-bar w-100"></div></div><span style="letter-spacing:-.1px">1 out of 1</span></div>
  <div class="rbody d-flex">
    <svg width="21" height="18" viewBox="0 0 21 18" style="margin-top:5px"><path d="M0 0h9l2 3h10v15H0z" fill="#3bae66"/><path d="M2 5h17v11H2z" fill="#eaf6ee"/><path d="M8 7l6 3.500L8 14z" fill="#248a4c"/></svg>
    <div class="text-nowrap" style="margin-left:10px;line-height:27px"><div style="letter-spacing:-.5px">TestCase</div><div class="fw-bold" style="font-size:17px">Recording1</div><div class="gray" style="line-height:24px;margin-top:1px;letter-spacing:-.24px">LineageGlueRule 'uia_win32_child' caused NullReferenceException on<br>Execute. Object reference not set to an instance of an object.</div></div>
  </div>
  <div class="rfoot d-flex align-items-center justify-content-center text-nowrap" style="padding:1px 6px 0 0">Press 'Pause' key to abort. Press 'Shift'+'Pause' keys to skip delays and timeouts.</div>
</section>

<svg class="cursor position-absolute" width="18" height="28" viewBox="0 0 18 28"><path d="M.5 0v23l5-4.500 4 8.500 4-2-4-8h7.500z" fill="#fff" stroke="#000" stroke-width="1.300"/></svg>
<script src="https://cdn.jsdelivr.net/npm/bootstrap@5.3.0/dist/js/bootstrap.bundle.min.js"></script>
</body>
</html>
